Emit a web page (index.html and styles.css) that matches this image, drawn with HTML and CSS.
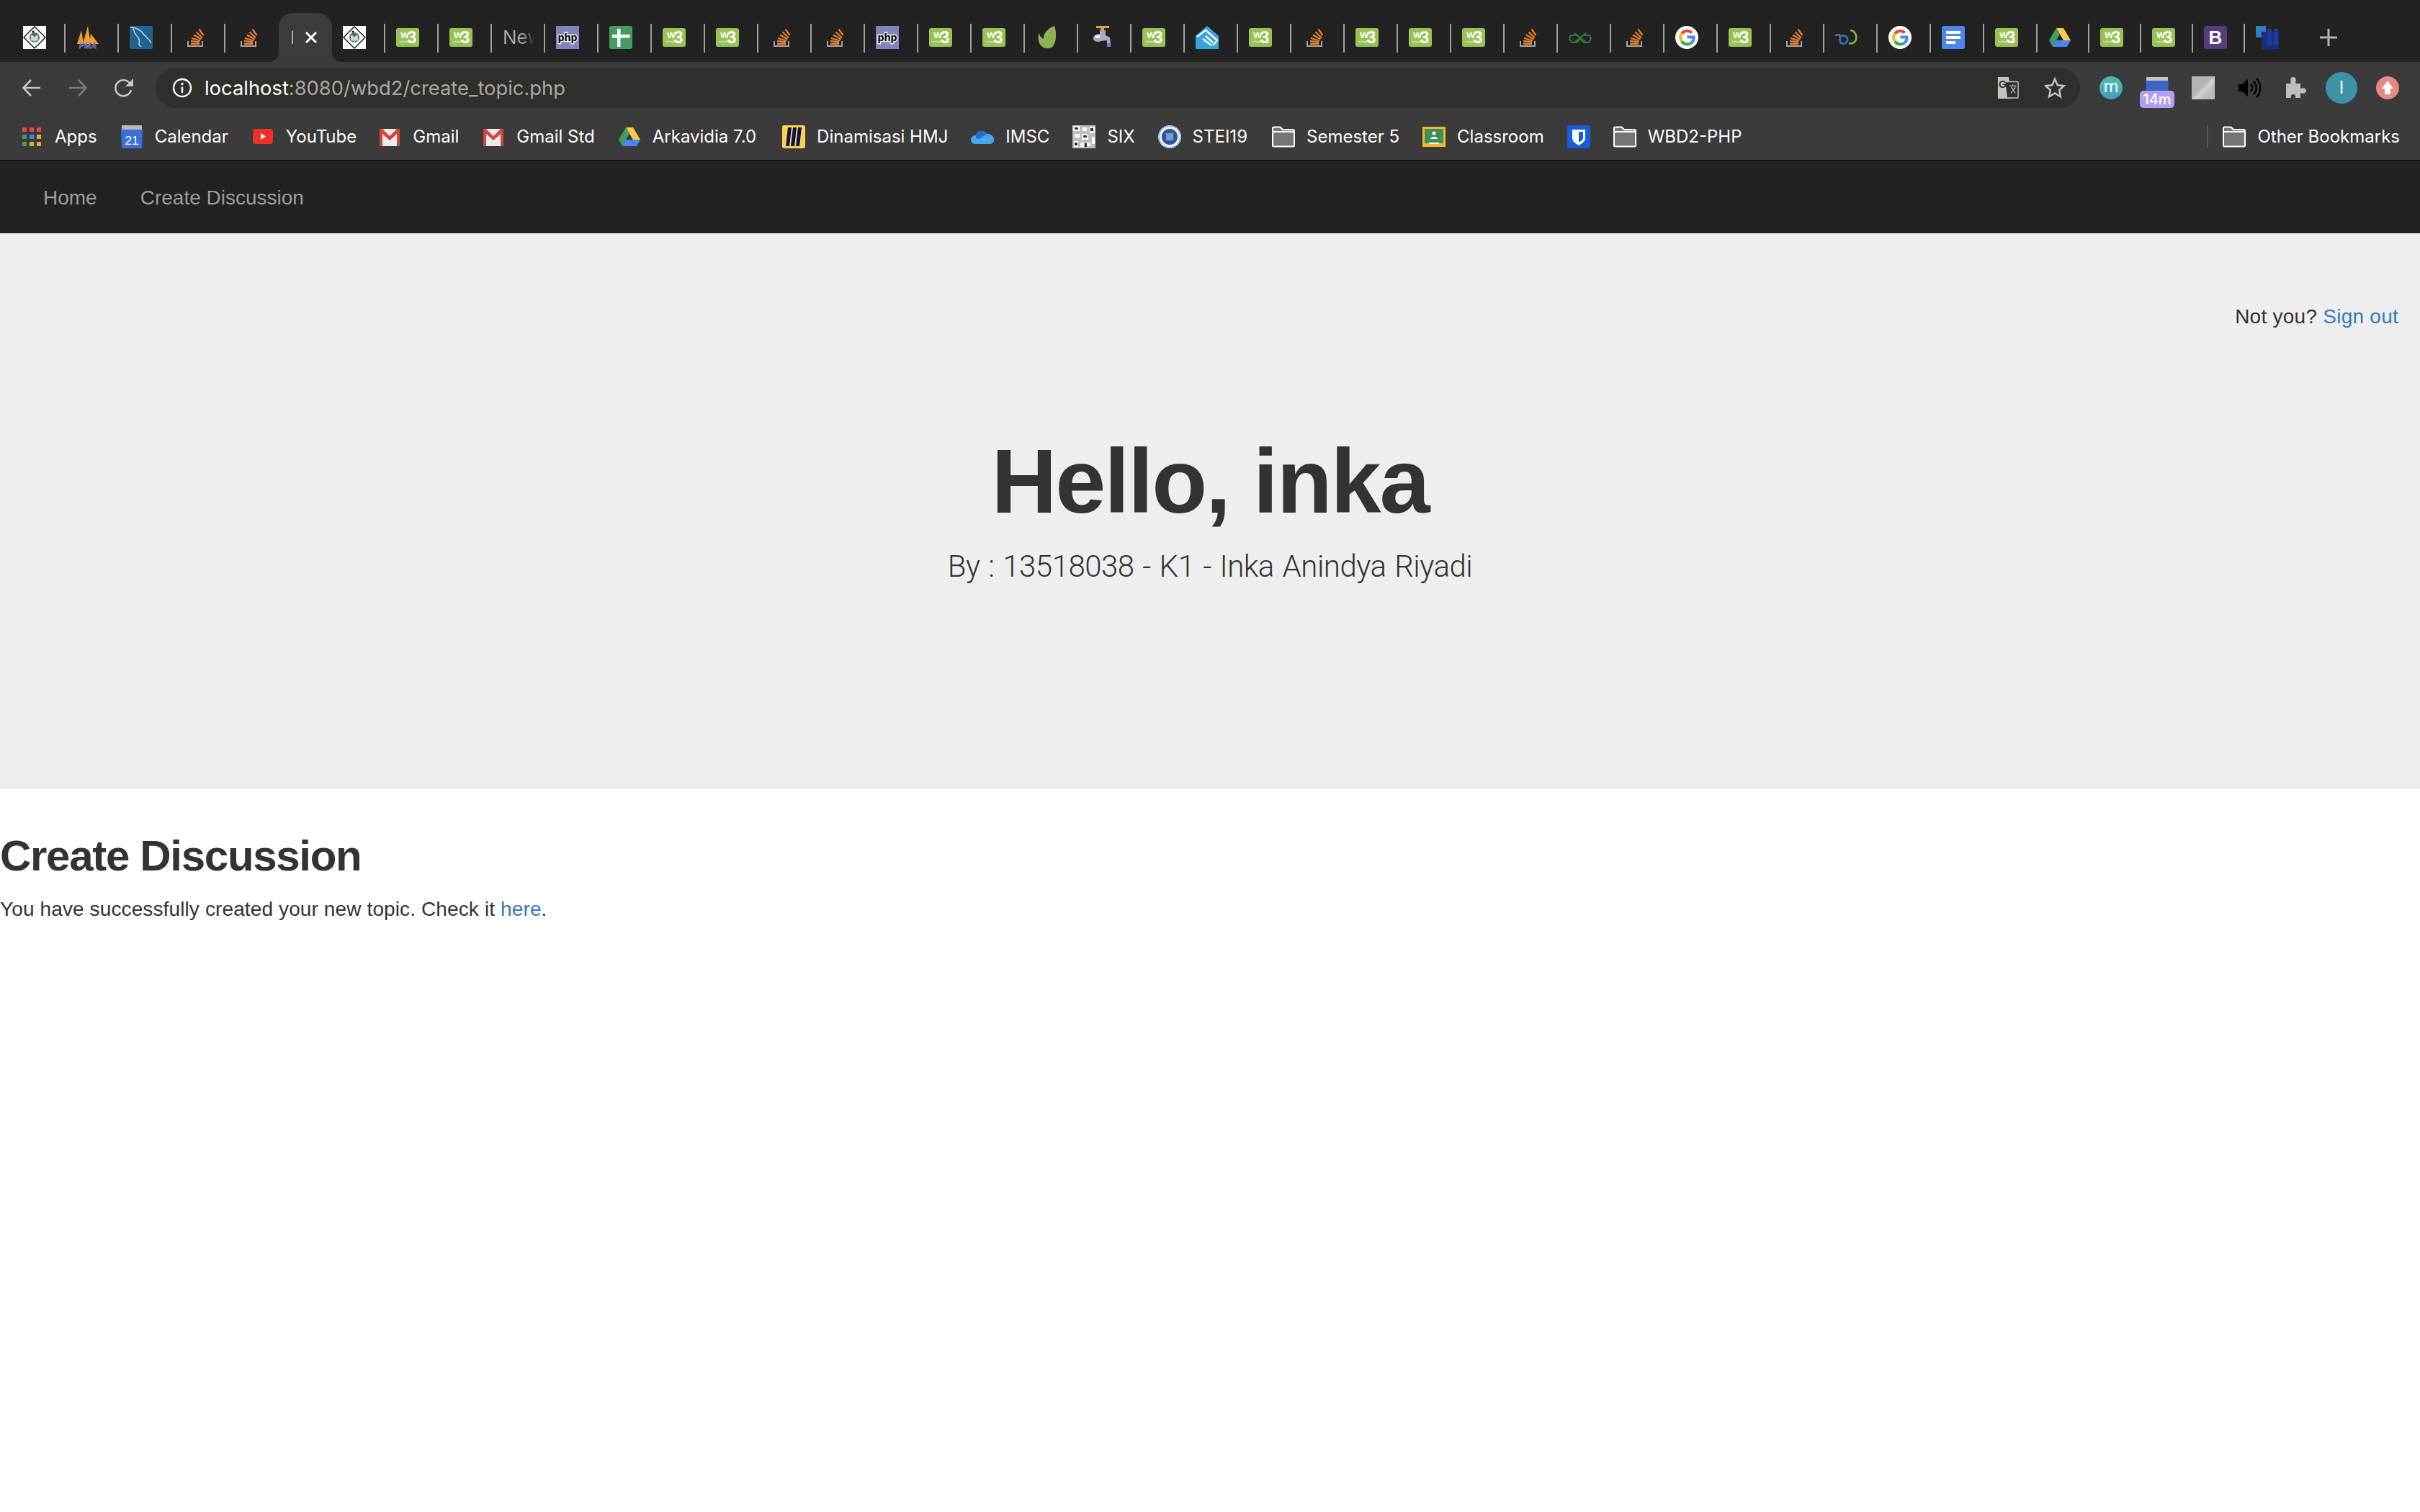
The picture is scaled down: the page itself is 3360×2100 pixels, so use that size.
FILE: index.html
```html
<!DOCTYPE html>
<html lang="en">

<head>
    <meta charset="UTF-8" />
    <title>Create Discussion</title>
    <link rel="stylesheet" href="styles.css">
</head>

<body>
    <!-- favicons, reused by tabs and bookmarks -->
    <svg class="defs" aria-hidden="true">
        <symbol id="i-tp" viewBox="0 0 32 32">
            <rect width="32" height="32" fill="#fff" />
            <path d="M16 1 31 16 16 31 1 16z" fill="#fff" stroke="#111" stroke-width="1.4" />
            <circle cx="16" cy="16" r="7" fill="#4d7a5c" />
            <path d="M11 13c3 0 4 1 5 3 1-2 2-3 5-3v7c-3 0-4 1-5 2-1-1-2-2-5-2z" fill="#cfd8cf" />
            <circle cx="14" cy="8" r="1.6" fill="#111" />
        </symbol>
        <symbol id="i-pma" viewBox="0 0 32 32">
            <path d="M1 25 7 6l3 19zM9 25l7-25 4 25zM18 25l2-14 11 14z" fill="#f39c32" />
            <text x="16" y="31" class="t-pma">PMA</text>
        </symbol>
        <symbol id="i-mysql" viewBox="0 0 32 32">
            <rect width="32" height="32" rx="2" fill="#22628f" />
            <path d="M1 2c8 0 14 3 19 10 3 4 7 6 10 12M5 3c1 6 3 9 6 12 2 2 3 5 2 11l3 3" fill="none" stroke="#c9d9e6" stroke-width="1.4" />
        </symbol>
        <symbol id="i-so" viewBox="0 0 32 32">
            <path d="M7 21v7h20v-7" fill="none" stroke="#a3a5a8" stroke-width="2" />
            <path d="M11 25h12M11 21l12 1.500M12 17l12 3.500M15 12.500l10.500 6M18.500 8.500l8.500 8M22.500 4.500l6 8.500" fill="none" stroke="#ea7f2a" stroke-width="2.300" />
        </symbol>
        <symbol id="i-w3" viewBox="0 0 32 32">
            <rect y="3" width="32" height="26" rx="3" fill="#97c354" />
            <text x="12" y="17" class="t-w">w</text>
            <text x="22" y="24" class="t-3">3</text>
            <text x="11" y="23" class="t-schools">schools</text>
        </symbol>
        <symbol id="i-php" viewBox="0 0 32 32">
            <rect width="32" height="32" fill="#8083bd" />
            <text x="16" y="21" class="t-php">php</text>
        </symbol>
        <symbol id="i-sheet" viewBox="0 0 32 32">
            <rect width="32" height="32" rx="3" fill="#469c60" />
            <path d="M11 4h4.500v8h13v4.500h-13V29H11V16.500H4V12h7z" fill="#fff" />
        </symbol>
        <symbol id="i-leaf" viewBox="0 0 32 32">
            <path d="M26 0c3 8 3 20-1 27-3 5-12 6-17 1C4 24 2 16 5 10c1 5 3 7 6 8-1-7 6-15 15-18z" fill="#8bb352" />
        </symbol>
        <symbol id="i-tap" viewBox="0 0 32 32">
            <path d="M10 0h18v3H21v4h-5V3h-6z" fill="#d5a83a" />
            <path d="M15 6h8v7l6 3 1 9h-5v-5l-8 1c-4 2-9 1-11-2-1-4 2-6 5-7l4-1z" fill="#a9a9b8" />
            <path d="M8 13c3-1 6-1 8 0l-1 4H8z" fill="#e6e6ee" />
            <path d="M25 24h5v5h-5z" fill="#4e8fd6" />
        </symbol>
        <symbol id="i-drop" viewBox="0 0 32 32">
            <path d="M16 0 32 14v18H0V14z" fill="#3ba3d9" />
            <path d="M2 15 14 6l16 14-6 7M14 14l10 9M10 18l12 9" fill="none" stroke="#e8f6fc" stroke-width="2.600" />
        </symbol>
        <symbol id="i-glass" viewBox="0 0 32 32">
            <path d="M3 13h9l4 4 4-4h9l2 4-3 6h-7l-5-5-5 5H4l-3-6zM8 10l16 13M24 10 8 23" fill="none" stroke="#2f7a3b" stroke-width="2.200" />
        </symbol>
        <symbol id="i-g" viewBox="0 0 32 32">
            <circle cx="16" cy="16" r="16" fill="#fff" />
            <path d="M9 10.500A9.500 9.500 0 0 1 22.800 9.500" fill="none" stroke="#e2483c" stroke-width="4" />
            <path d="M9 10.500a9.500 9.500 0 0 0 0 11" fill="none" stroke="#f4b923" stroke-width="4" />
            <path d="M9 21.500a9.500 9.500 0 0 0 13.500 2" fill="none" stroke="#37a455" stroke-width="4" />
            <path d="M22.500 23.500a9.500 9.500 0 0 0 3-8h-9" fill="none" stroke="#4688f1" stroke-width="4" />
        </symbol>
        <symbol id="i-swirl" viewBox="0 0 32 32">
            <path d="M21 6c8 1 10 10 7 15-2 3-6 4-9 3" fill="none" stroke="#8ab83f" stroke-width="2.500" />
            <path d="M5 14c9-2 13 1 12 6-1 5-8 6-10 2-1-2-1-4 1-7" fill="none" stroke="#2a6fb5" stroke-width="2.800" />
            <path d="M0 12l7-1v2l-7 1z" fill="#dc5a30" />
        </symbol>
        <symbol id="i-docs" viewBox="0 0 32 32">
            <rect width="32" height="32" rx="3" fill="#4c87ee" />
            <path d="M6 7h20v4H6zM6 14h20v4H6zM6 21h13v4H6z" fill="#fff" />
        </symbol>
        <symbol id="i-drive" viewBox="0 0 32 32">
            <path d="M11 3h10l10 17H21z" fill="#fdc94b" />
            <path d="M11 3l5 8.500L6 29l-5-9z" fill="#3f9f5f" />
            <path d="M11 20h20l-5 9H6z" fill="#4688f1" />
        </symbol>
        <symbol id="i-boot" viewBox="0 0 32 32">
            <rect width="32" height="32" rx="4" fill="#563d7c" />
            <text x="16" y="25" class="t-boot">B</text>
        </symbol>
        <symbol id="i-dark" viewBox="0 0 32 32">
            <path d="M0 0h14v8H8v8H0z" fill="#2f7fc4" />
            <path d="M8 8h24v24H8z" fill="#1a2f7c" />
            <path d="M16 4h6v22h-6zM25 4h6v22h-6z" fill="#213a9a" />
        </symbol>
        <symbol id="i-cal" viewBox="0 0 32 32">
            <path d="M2 0h28v7H2z" fill="#b8b8b8" />
            <path d="M1 6h30l-1 26H2z" fill="#3c6fd8" />
            <text x="16" y="27" class="t-cal">21</text>
        </symbol>
        <symbol id="i-yt" viewBox="0 0 32 32">
            <rect x="2" y="5" width="28" height="21" rx="4" fill="#ee3124" />
            <path d="M13 11l7 4.500-7 4.500z" fill="#fff" />
        </symbol>
        <symbol id="i-gmail" viewBox="0 0 32 32">
            <path d="M2 5h28v24H2z" fill="#ececec" />
            <path d="M2 5h4l10 10L26 5h4v24h-4V12l-10 9-10-9v17H2z" fill="#d0473b" />
        </symbol>
        <symbol id="i-miro" viewBox="0 0 32 32">
            <rect width="32" height="32" rx="3" fill="#fcd34f" />
            <path d="M8 3h5l-3 26H5zM15 3h5l-3 26h-5zM22 3h5l-3 26h-5z" fill="#0f1250" />
        </symbol>
        <symbol id="i-cloud" viewBox="0 0 32 32">
            <path d="M7 14c2-7 12-8 15-2 5-1 10 3 10 8 0 4-3 6-6 6H6c-4 0-6-3-6-6s3-6 7-6z" fill="#4aa5e9" />
            <path d="M7 14c2-7 12-8 15-2l-10 7-5-1z" fill="#1e6fc9" />
        </symbol>
        <symbol id="i-six" viewBox="0 0 32 32">
            <rect width="32" height="32" fill="#bdbdbd" />
            <path d="M1 1h9v7H1zM14 3h6v5h-6zM24 2h7v9h-7zM3 12h7v5H3zM13 12h9v8h-9zM2 22h6v8H2zM11 24h5v6h-5zM20 24h5v5h-5zM27 16h4v10h-4z" fill="#fff" />
            <path d="M3 3h5v3H3zM15 14h5v3h-5zM3 24h4v4H3zM25 4h4v4h-4zM17 25h3v5h-3z" fill="#333" />
        </symbol>
        <symbol id="i-stei" viewBox="0 0 32 32">
            <circle cx="16" cy="16" r="16" fill="#e8edf3" />
            <circle cx="16" cy="16" r="15" fill="none" stroke="#3e629b" stroke-width="1" stroke-dasharray="2 1" />
            <circle cx="16" cy="16" r="11" fill="#2e5797" />
            <path d="M11 11h10v10H11z" fill="#7f9cc8" />
        </symbol>
        <symbol id="i-folder" viewBox="0 0 32 32">
            <path d="M1 7V4c0-1 .5-1.500 1.500-1.500h9L15 6h14c1 0 2 1 2 2v20c0 1-1 1.500-2 1.500H3c-1 0-2-.5-2-1.500z" fill="#757575" stroke="#fff" stroke-width="2" />
            <path d="M1 9h30" stroke="#fff" stroke-width="2" />
        </symbol>
        <symbol id="i-class" viewBox="0 0 32 32">
            <rect y="2" width="32" height="28" fill="#f2b632" />
            <rect x="3" y="5" width="26" height="20" fill="#3e8e55" />
            <circle cx="16" cy="11" r="2.500" fill="#fff" />
            <path d="M11 19c0-4 10-4 10 0zM9 24h14v2H9z" fill="#fff" />
        </symbol>
        <symbol id="i-bit" viewBox="0 0 32 32">
            <rect width="32" height="32" rx="4" fill="#175ddc" />
            <path d="M7 6h18v12c0 4-4 7-9 10-5-3-9-6-9-10z" fill="#fff" />
            <path d="M16 9h6v9c0 2-3 4-6 6z" fill="#175ddc" />
        </symbol>
    </svg>

    <div class="tabstrip">
        <div class="tab"><svg class="fav"><use href="#i-tp" /></svg></div>
        <div class="tab"><svg class="fav"><use href="#i-pma" /></svg></div>
        <div class="tab"><svg class="fav"><use href="#i-mysql" /></svg></div>
        <div class="tab"><svg class="fav"><use href="#i-so" /></svg></div>
        <div class="tab no-sep"><svg class="fav"><use href="#i-so" /></svg></div>
        <div class="tab active">
            <span class="tab-clip"></span>
            <svg class="tab-close" viewBox="0 0 16 16"><path d="M1 1l14 14M15 1 1 15" /></svg>
        </div>
        <div class="tab"><svg class="fav"><use href="#i-tp" /></svg></div>
        <div class="tab"><svg class="fav"><use href="#i-w3" /></svg></div>
        <div class="tab"><svg class="fav"><use href="#i-w3" /></svg></div>
        <div class="tab"><span class="tab-title">New</span></div>
        <div class="tab"><svg class="fav"><use href="#i-php" /></svg></div>
        <div class="tab"><svg class="fav"><use href="#i-sheet" /></svg></div>
        <div class="tab"><svg class="fav"><use href="#i-w3" /></svg></div>
        <div class="tab"><svg class="fav"><use href="#i-w3" /></svg></div>
        <div class="tab"><svg class="fav"><use href="#i-so" /></svg></div>
        <div class="tab"><svg class="fav"><use href="#i-so" /></svg></div>
        <div class="tab"><svg class="fav"><use href="#i-php" /></svg></div>
        <div class="tab"><svg class="fav"><use href="#i-w3" /></svg></div>
        <div class="tab"><svg class="fav"><use href="#i-w3" /></svg></div>
        <div class="tab"><svg class="fav"><use href="#i-leaf" /></svg></div>
        <div class="tab"><svg class="fav"><use href="#i-tap" /></svg></div>
        <div class="tab"><svg class="fav"><use href="#i-w3" /></svg></div>
        <div class="tab"><svg class="fav"><use href="#i-drop" /></svg></div>
        <div class="tab"><svg class="fav"><use href="#i-w3" /></svg></div>
        <div class="tab"><svg class="fav"><use href="#i-so" /></svg></div>
        <div class="tab"><svg class="fav"><use href="#i-w3" /></svg></div>
        <div class="tab"><svg class="fav"><use href="#i-w3" /></svg></div>
        <div class="tab"><svg class="fav"><use href="#i-w3" /></svg></div>
        <div class="tab"><svg class="fav"><use href="#i-so" /></svg></div>
        <div class="tab"><svg class="fav"><use href="#i-glass" /></svg></div>
        <div class="tab"><svg class="fav"><use href="#i-so" /></svg></div>
        <div class="tab"><svg class="fav"><use href="#i-g" /></svg></div>
        <div class="tab"><svg class="fav"><use href="#i-w3" /></svg></div>
        <div class="tab"><svg class="fav"><use href="#i-so" /></svg></div>
        <div class="tab"><svg class="fav"><use href="#i-swirl" /></svg></div>
        <div class="tab"><svg class="fav"><use href="#i-g" /></svg></div>
        <div class="tab"><svg class="fav"><use href="#i-docs" /></svg></div>
        <div class="tab"><svg class="fav"><use href="#i-w3" /></svg></div>
        <div class="tab narrow"><svg class="fav"><use href="#i-drive" /></svg></div>
        <div class="tab narrow"><svg class="fav"><use href="#i-w3" /></svg></div>
        <div class="tab narrow"><svg class="fav"><use href="#i-w3" /></svg></div>
        <div class="tab narrow"><svg class="fav"><use href="#i-boot" /></svg></div>
        <div class="tab narrow no-sep"><svg class="fav"><use href="#i-dark" /></svg></div>
        <svg class="new-tab" viewBox="0 0 24 24"><path d="M12 0v24M0 12h24" /></svg>
    </div>

    <div class="toolbar">
        <div class="tool-btn">
            <svg class="tool-icon" viewBox="0 0 28 28"><path d="M26 14H3M13 3 2.500 14 13 25" /></svg>
        </div>
        <div class="tool-btn dim">
            <svg class="tool-icon" viewBox="0 0 28 28"><path d="M2 14h23M15 3l10.500 11L15 25" /></svg>
        </div>
        <div class="tool-btn">
            <svg class="tool-icon" viewBox="0 0 28 28"><path d="M24 17a11 11 0 1 1-2-9.500" /><path class="solid" d="M27 1v11H16z" /></svg>
        </div>
        <div class="omnibox">
            <svg class="info-icon" viewBox="0 0 28 28">
                <circle cx="14" cy="14" r="12" />
                <path d="M14 12.500V21" />
                <circle class="solid" cx="14" cy="8.500" r="1.700" />
            </svg>
            <span class="url"><span class="url-host">localhost</span>:8080/wbd2/create_topic.php</span>
            <svg class="omni-action translate" viewBox="0 0 32 32">
                <path d="M1 0h16l4 32H1z" fill="#c4c4c4" />
                <path d="M12 7h18c1 0 1 1 1 1v22c0 1-1 1-1 1H15" fill="#30302b" stroke="#c4c4c4" stroke-width="1.500" />
                <text x="8" y="16" class="t-g">G</text>
                <path d="M18 13h10M23 11v2M20 24l7-9M21 15l6 9" fill="none" stroke="#c4c4c4" stroke-width="1.300" />
            </svg>
            <svg class="omni-action star" viewBox="0 0 32 32">
                <path d="M16 3l4 9 9.500 1-7 6.500 2 9.500-8.500-5-8.500 5 2-9.500-7-6.500 9.500-1z" />
            </svg>
        </div>
        <div class="ext-btn"><span class="ext-round ext-m">m</span></div>
        <div class="ext-btn">
            <svg class="fav" viewBox="0 0 32 32">
                <path d="M1 1h30v6H1z" fill="#c4c4c4" />
                <path d="M0 6h32l-1 16H1z" fill="#3a66c8" />
            </svg>
            <span class="ext-badge">14m</span>
        </div>
        <div class="ext-btn"><span class="ext-blank"></span></div>
        <div class="ext-btn">
            <svg class="fav" viewBox="0 0 32 32">
                <path d="M1 11h5l8-7v24l-8-7H1z" fill="#000" />
                <path d="M18 11c3 3 3 7 0 10M22 7c5 5 5 13 0 18M26 3c7 7 7 19 0 26" fill="none" stroke="#000" stroke-width="2.500" />
            </svg>
        </div>
        <div class="ext-btn">
            <svg class="fav" viewBox="0 0 32 32">
                <path d="M3 10h7c-2-6 0-9 3-9s5 3 3 9h7v7c5-2 8 0 8 3s-3 5-8 3v7h-7c1-4-1-5-3-5s-4 1-3 5H3z" fill="#bdbdbd" />
            </svg>
        </div>
        <div class="ext-btn"><span class="avatar">I</span></div>
        <div class="ext-btn">
            <svg class="fav" viewBox="0 0 32 32">
                <circle cx="16" cy="16" r="16" fill="#e58a83" />
                <path d="M16 6l8 11h-4v8h-8v-8H8z" fill="#fff" />
            </svg>
        </div>
    </div>

    <div class="bookmarks">
        <div class="bookmark">
            <span class="apps-grid">
                <i class="r"></i><i class="r"></i><i class="r"></i>
                <i class="g"></i><i class="b"></i><i class="o"></i>
                <i class="g"></i><i class="o"></i><i class="o"></i>
            </span>
            Apps
        </div>
        <div class="bookmark"><svg class="fav"><use href="#i-cal" /></svg>Calendar</div>
        <div class="bookmark"><svg class="fav"><use href="#i-yt" /></svg>YouTube</div>
        <div class="bookmark pull"><svg class="fav"><use href="#i-gmail" /></svg>Gmail</div>
        <div class="bookmark"><svg class="fav"><use href="#i-gmail" /></svg>Gmail Std</div>
        <div class="bookmark"><svg class="fav"><use href="#i-drive" /></svg>Arkavidia 7.0</div>
        <div class="bookmark nudge"><svg class="fav"><use href="#i-miro" /></svg>Dinamisasi HMJ</div>
        <div class="bookmark"><svg class="fav"><use href="#i-cloud" /></svg>IMSC</div>
        <div class="bookmark"><svg class="fav"><use href="#i-six" /></svg>SIX</div>
        <div class="bookmark"><svg class="fav"><use href="#i-stei" /></svg>STEI19</div>
        <div class="bookmark nudge-sm"><svg class="fav"><use href="#i-folder" /></svg>Semester 5</div>
        <div class="bookmark"><svg class="fav"><use href="#i-class" /></svg>Classroom</div>
        <div class="bookmark"><svg class="fav"><use href="#i-bit" /></svg></div>
        <div class="bookmark"><svg class="fav"><use href="#i-folder" /></svg>WBD2-PHP</div>
        <div class="bookmark-sep"></div>
        <div class="bookmark"><svg class="fav"><use href="#i-folder" /></svg>Other Bookmarks</div>
    </div>

    <nav class="navbar">
        <a href="#">Home</a>
        <a href="#">Create Discussion</a>
    </nav>

    <div class="jumbotron">
        <p class="signout">Not you? <a href="#">Sign out</a></p>
        <h1>Hello, inka</h1>
        <p class="lead">By : 13518038 - K1 - Inka Anindya Riyadi</p>
    </div>

    <h2>Create Discussion</h2>
    <p class="message">You have successfully created your new topic. Check it <a href="#">here</a>.</p>
</body>

</html>
```

FILE: styles.css
```css
body {
    margin: 0;
    font-family: "Liberation Sans", Arial, sans-serif;
    font-size: 28px;
    line-height: 40px;
    color: #333;
    background: #fff;
}

a {
    color: #337ab7;
    text-decoration: none;
}

.defs {
    display: none;
}

.fav {
    display: block;
    flex: none;
    width: 32px;
    height: 32px;
}

/* tab strip */
.tabstrip {
    display: flex;
    height: 86px;
    padding-left: 17px;
    box-sizing: border-box;
    background: #222;
}

.tab {
    display: flex;
    align-items: center;
    position: relative;
    flex: none;
    width: 74px;
    height: 68px;
    margin-top: 18px;
    padding-left: 15px;
    box-sizing: border-box;
    border-right: 2px solid transparent;
}

.tab::after {
    content: "";
    position: absolute;
    right: -2px;
    top: 15px;
    width: 2px;
    height: 40px;
    background: #a0a0a0;
}

.tab.narrow {
    width: 72px;
}

.tab.no-sep::after {
    display: none;
}

.tab-title {
    width: 44px;
    overflow: hidden;
    font-family: Inter, sans-serif;
    font-size: 26px;
    color: #a8a8a8;
    -webkit-mask-image: linear-gradient(to right, #000 60%, transparent);
    mask-image: linear-gradient(to right, #000 60%, transparent);
}

.tab.active {
    padding-left: 18px;
    background: #3b3c3c;
    border-right: 0;
    border-radius: 20px 20px 0 0;
}

.tab.active::before,
.tab.active::after {
    content: "";
    position: absolute;
    bottom: 0;
    top: auto;
    width: 14px;
    height: 14px;
    background: radial-gradient(circle at 0 0, #222 14px, #3b3c3c 14.5px);
}

.tab.active::before {
    left: -14px;
}

.tab.active::after {
    right: -14px;
    background: radial-gradient(circle at 100% 0, #222 14px, #3b3c3c 14.5px);
}

.tab-clip {
    width: 2px;
    height: 18px;
    background: #aaa;
}

.tab-close {
    width: 16px;
    height: 16px;
    margin-left: 17px;
    fill: none;
    stroke: #fff;
    stroke-width: 3;
}

.new-tab {
    flex: none;
    width: 24px;
    height: 24px;
    margin: 40px 0 0 32px;
    fill: none;
    stroke: #b4b4b4;
    stroke-width: 3;
}

/* toolbar */
.toolbar {
    display: flex;
    align-items: flex-end;
    height: 64px;
    padding: 0 13px 0 12px;
    box-sizing: border-box;
    background: #3b3b3b;
}

.tool-btn {
    display: flex;
    align-items: center;
    justify-content: center;
    flex: none;
    width: 64px;
    height: 56px;
}

.tool-icon {
    width: 28px;
    height: 28px;
    fill: none;
    stroke: #c6c6c6;
    stroke-width: 2.600;
}

.tool-icon .solid {
    fill: #c6c6c6;
    stroke: none;
}

.tool-btn.dim .tool-icon {
    stroke: #7b7b7b;
}

.omnibox {
    display: flex;
    align-items: center;
    flex: 1;
    height: 56px;
    margin: 0 11px 0 12px;
    padding: 0 20px 0 23px;
    background: #30302b;
    border-radius: 28px;
}

.info-icon {
    flex: none;
    width: 28px;
    height: 28px;
    fill: none;
    stroke: #fff;
    stroke-width: 2.400;
}

.info-icon .solid {
    fill: #fff;
    stroke: none;
}

.url {
    flex: 1;
    margin-left: 17px;
    padding-top: 1px;
    font-family: Inter, sans-serif;
    font-size: 27.350px;
    color: #a8a8a8;
}

.url-host {
    color: #fff;
}

.omni-action {
    flex: none;
    width: 30px;
    height: 32px;
}

.translate {
    margin-right: 35px;
}

.star {
    fill: none;
    stroke: #c6c6c6;
    stroke-width: 2.600;
}

.t-g {
    font: 700 15px "Liberation Sans", sans-serif;
    fill: #333;
    text-anchor: middle;
}

.ext-btn {
    display: flex;
    align-items: center;
    justify-content: center;
    position: relative;
    flex: none;
    width: 64px;
    height: 56px;
}

.ext-round {
    width: 32px;
    height: 32px;
    border-radius: 50%;
    font-family: Inter, sans-serif;
    font-size: 24px;
    line-height: 28px;
    text-align: center;
    color: #fff;
}

.ext-m {
    background: linear-gradient(#4dbcab, #3f9fc0);
}

.ext-badge {
    position: absolute;
    left: 8px;
    bottom: 0;
    width: 48px;
    height: 24px;
    background: #b39ef5;
    border-radius: 5px;
    font-family: Inter, sans-serif;
    font-size: 20px;
    font-weight: 500;
    line-height: 24px;
    text-align: center;
    color: #fff;
}

.ext-blank {
    width: 32px;
    height: 32px;
    background: linear-gradient(135deg, #b4b4b4 45%, #d2d2d2 55%, #bcbcbc 75%);
}

.avatar {
    width: 44px;
    height: 44px;
    background: #3e93a6;
    border-radius: 50%;
    font-family: Inter, sans-serif;
    font-size: 24px;
    line-height: 44px;
    text-align: center;
    color: #fff;
}

/* bookmarks */
.bookmarks {
    display: flex;
    align-items: center;
    height: 74px;
    padding: 8px 12px 0;
    box-sizing: border-box;
    background: #3b3b3b;
    border-bottom: 2px solid #121212;
    font-family: Inter, sans-serif;
    font-size: 24px;
    color: #fff;
}

.bookmark {
    display: flex;
    align-items: center;
    gap: 16px;
    flex: none;
    padding: 0 16px;
}

.bookmark.pull {
    margin-left: -2px;
}

.bookmark.nudge {
    margin-left: 4px;
}

.bookmark.nudge-sm {
    margin-left: 2px;
}

.bookmark-sep {
    width: 2px;
    height: 32px;
    margin: 0 4px 0 auto;
    background: #575757;
}

.apps-grid {
    display: grid;
    grid-template-columns: repeat(3, 6px);
    gap: 4px;
    flex: none;
    width: 32px;
    height: 26px;
    padding-left: 3px;
    box-sizing: border-box;
}

.apps-grid i {
    display: block;
    height: 6px;
}

.apps-grid .r {
    background: #e5493f;
}

.apps-grid .g {
    background: #4f9c5a;
}

.apps-grid .b {
    background: #3f8ae8;
}

.apps-grid .o {
    background: #e8a53c;
}

/* favicon text */
.t-pma {
    font: italic 700 11px "Liberation Sans", sans-serif;
    fill: #3d4189;
    stroke: #d8d8e8;
    stroke-width: .3;
    text-anchor: middle;
}

.t-w {
    font: 700 15px "Liberation Sans", sans-serif;
    fill: #fff;
    text-anchor: middle;
}

.t-3 {
    font: 700 23px "Liberation Sans", sans-serif;
    fill: #fff;
    text-anchor: middle;
}

.t-schools {
    font: 400 4px "Liberation Sans", sans-serif;
    fill: #fff;
    text-anchor: middle;
}

.t-php {
    font: 700 15px "Liberation Mono", monospace;
    fill: #000;
    stroke: #e6e6e6;
    stroke-width: 3;
    paint-order: stroke;
    text-anchor: middle;
}

.t-boot {
    font: 700 26px "Liberation Sans", sans-serif;
    fill: #fff;
    text-anchor: middle;
}

.t-cal {
    font: 400 17px "Liberation Sans", sans-serif;
    fill: #fff;
    text-anchor: middle;
}

/* page */
.navbar {
    display: flex;
    height: 100px;
    padding: 0 30px;
    background: #222;
}

.navbar a {
    padding: 31px 30px 29px;
    color: #9d9d9d;
}

.jumbotron {
    height: 772px;
    padding-top: 96px;
    box-sizing: border-box;
    background: #eee;
}

.signout {
    margin: 0;
    padding-right: 30px;
    letter-spacing: .25px;
    text-align: right;
}

.jumbotron h1 {
    margin: 139px 0 19px;
    font-size: 126px;
    font-weight: 700;
    line-height: 139px;
    letter-spacing: -2.100px;
    text-align: center;
}

.lead {
    margin: 0;
    font-family: Roboto, "Liberation Sans", sans-serif;
    font-size: 42px;
    font-weight: 300;
    line-height: 60px;
    letter-spacing: -.5px;
    word-spacing: 2px;
    text-align: center;
}

h2 {
    margin: 60px 0 21px;
    font-size: 60px;
    font-weight: 700;
    line-height: 66px;
    letter-spacing: -1.300px;
}

.message {
    margin: 0;
    letter-spacing: .12px;
}
```
